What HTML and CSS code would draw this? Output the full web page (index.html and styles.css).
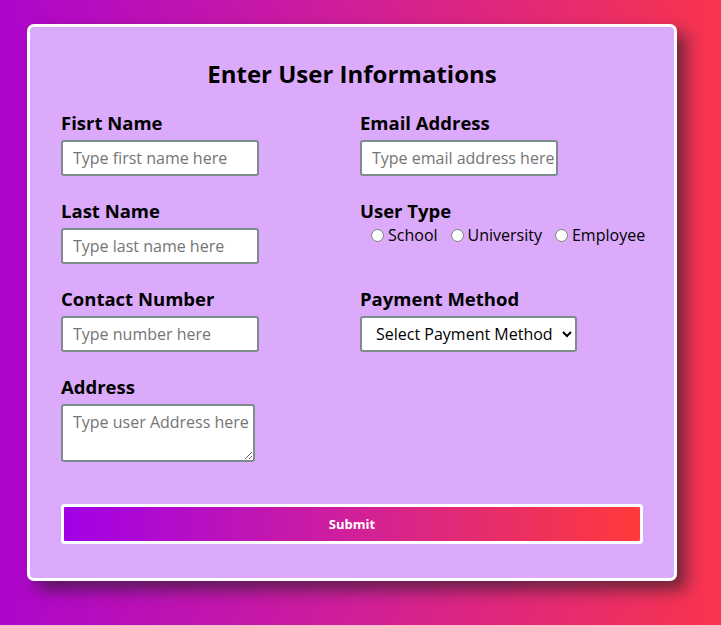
FILE: index.html
```html
<!DOCTYPE html>
<html lang="en">
<head>
<meta charset="utf-8">
<title>Enter User Informations</title>
<link rel="stylesheet" href="styles.css">
</head>
<body>
<form class="card">
  <h1 class="title">Enter User Informations</h1>
  <div class="grid">
    <div class="field">
      <label class="label" for="fn">Fisrt Name</label>
      <input class="input" id="fn" type="text" placeholder="Type first name here">
    </div>
    <div class="field">
      <label class="label" for="em">Email Address</label>
      <input class="input" id="em" type="email" placeholder="Type email address here">
    </div>
    <div class="field">
      <label class="label" for="ln">Last Name</label>
      <input class="input" id="ln" type="text" placeholder="Type last name here">
    </div>
    <div class="field">
      <span class="label">User Type</span>
      <div class="radios">
        <label class="radio"><input type="radio" name="ut">School</label>
        <label class="radio"><input type="radio" name="ut">University</label>
        <label class="radio"><input type="radio" name="ut">Employee</label>
      </div>
    </div>
    <div class="field">
      <label class="label" for="cn">Contact Number</label>
      <input class="input" id="cn" type="text" placeholder="Type number here">
    </div>
    <div class="field">
      <label class="label" for="pm">Payment Method</label>
      <select class="select" id="pm">
        <option>Select Payment Method</option>
        <option>Credit Card</option>
        <option>PayPal</option>
      </select>
    </div>
    <div class="field">
      <label class="label" for="ad">Address</label>
      <textarea class="textarea" id="ad" placeholder="Type user Address here"></textarea>
    </div>
  </div>
  <button class="submit" type="button">Submit</button>
</form>
</body>
</html>
```
FILE: styles.css
```css
html, body {
  margin: 0;
  height: 100%;
}
body {
  background: linear-gradient(to right, #ad06cc 0%, #d01f98 50%, #f8344e 100%);
  font-family: "Open Sans", "Noto Sans", sans-serif;
  padding: 24px 0 0 27px;
  box-sizing: border-box;
}
.card {
  box-sizing: border-box;
  width: 650px;
  height: 557px;
  background: #dbaafb;
  border: 3px solid #ffffff;
  border-radius: 7px;
  box-shadow: 9px 9px 16px rgba(40, 30, 40, 0.65);
  padding: 31px 31px 0 31px;
}
.title {
  margin: 0;
  text-align: center;
  font-size: 24px;
  line-height: 32px;
  font-weight: 700;
  color: #000;
}
.grid {
  margin-top: 21px;
  display: grid;
  grid-template-columns: 299px 1fr;
  row-gap: 23px;
}
.field {
  display: flex;
  flex-direction: column;
  align-items: flex-start;
}
.label {
  font-size: 18.5px;
  line-height: 24px;
  font-weight: 700;
  color: #000;
  margin-bottom: 5px;
}
.input, .select, .textarea {
  box-sizing: border-box;
  font-family: "Open Sans", "Noto Sans", sans-serif;
  font-size: 16px;
  border: 2px solid #7f8c8d;
  border-radius: 3px;
  background: #fff;
  color: #000;
}
.input {
  width: 198px;
  height: 36px;
  padding: 0 2px 0 10px;
}
.input::placeholder, .textarea::placeholder {
  color: #757575;
}
.select {
  width: 217px;
  height: 36px;
  padding: 0 0 0 10px;
}
.textarea {
  width: 194px;
  height: 58px;
  padding: 5px 2px 5px 10px;
  display: block;
  resize: vertical;
}
.radios {
  display: flex;
  margin-top: -4px;
  padding-left: 8px;
}
.radio {
  display: flex;
  align-items: center;
  font-size: 16px;
  line-height: 22px;
  color: #000;
  margin-right: 10px;
}
.radio input {
  width: 13px;
  height: 13px;
  margin: 1px 4px 0 3px;
}
.submit {
  box-sizing: border-box;
  display: block;
  width: 100%;
  height: 40px;
  margin-top: 42px;
  border: 3px solid #fff;
  border-radius: 4px;
  background: linear-gradient(to right, #a100e6 0%, #d0209a 50%, #ff3a3a 100%);
  color: #fff;
  font-family: "Open Sans", "Noto Sans", sans-serif;
  font-size: 13px;
  font-weight: 700;
}
```
